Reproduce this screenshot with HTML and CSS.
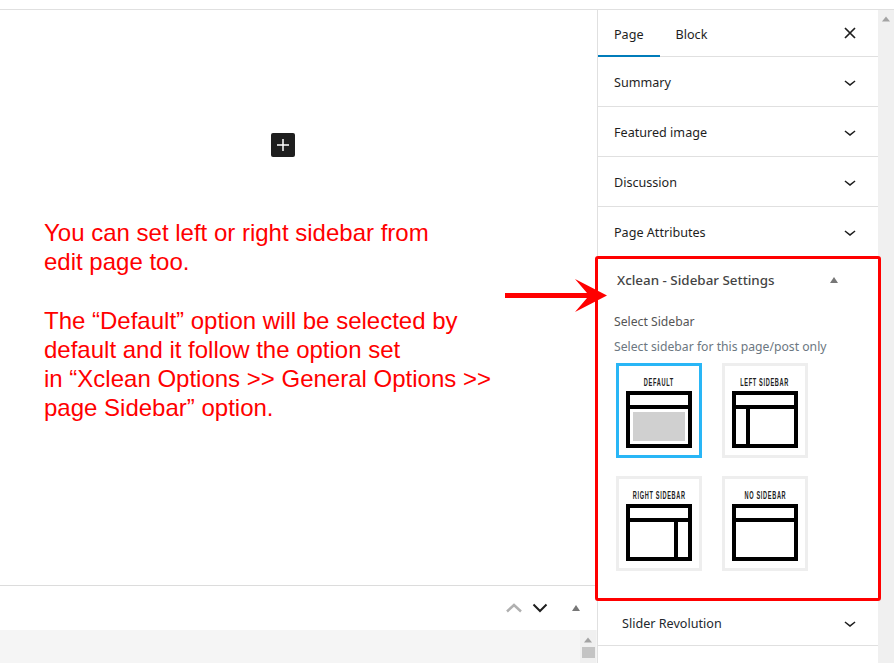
FILE: index.html
```html
<!DOCTYPE html>
<html lang="en">
<head>
    <meta charset="UTF-8">
    <meta name="viewport" content="width=device-width, initial-scale=1.0">
    <title>Edit Page</title>
    <link rel="stylesheet" href="styles.css">
</head>
<body>
    <svg class="sprite" width="0" height="0">
        <symbol id="chevron" viewBox="0 0 24 24">
            <path d="M17.5 11.6L12 16l-5.5-4.4.9-1.2L12 14l4.6-3.5z"></path>
        </symbol>
    </svg>

    <div class="app">
        <div class="top-gap"></div>
        <div class="workspace">
            <!-- Editor -->
            <main class="editor">
                <div class="canvas">
                    <button class="add-block" type="button" aria-label="Add block">
                        <svg width="24" height="24" viewBox="0 0 24 24"><path d="M11.25 6h1.5v5.25H18v1.5h-5.25V18h-1.5v-5.25H6v-1.5h5.25z"></path></svg>
                    </button>
                    <div class="note">
                        <p>
                            You can set left or right sidebar from<br>
                            edit page too.
                        </p>
                        <p>
                            The “Default” option will be selected by<br>
                            default and it follow the option set<br>
                            in “Xclean Options &gt;&gt; General Options &gt;&gt;<br>
                            page Sidebar” option.
                        </p>
                    </div>
                </div>
                <div class="meta-bar">
                    <svg class="move-up" width="16" height="10" viewBox="0 0 16 10"><polyline points="1,8.5 8,2 15,8.5"></polyline></svg>
                    <svg class="move-down" width="16" height="10" viewBox="0 0 16 10"><polyline points="1.5,1.5 8,8 14.5,1.5"></polyline></svg>
                    <svg class="toggle" width="10" height="8" viewBox="0 0 10 8"><polygon points="5,1 9,7 1,7"></polygon></svg>
                </div>
                <div class="meta-bottom">
                    <div class="mini-scroll">
                        <svg width="10" height="6" viewBox="0 0 10 6"><polygon points="5,0.5 9,5.5 1,5.5"></polygon></svg>
                        <div class="mini-thumb"></div>
                    </div>
                </div>
            </main>

            <!-- Settings sidebar -->
            <aside class="sidebar">
                <div class="tabs">
                    <span class="tab active">Page</span>
                    <span class="tab">Block</span>
                    <svg class="close" width="12" height="12" viewBox="0 0 12 12"><path d="M1 1l10 10M11 1L1 11"></path></svg>
                </div>

                <div class="row"><span>Summary</span><svg class="chev"><use href="#chevron"></use></svg></div>
                <div class="row"><span>Featured image</span><svg class="chev"><use href="#chevron"></use></svg></div>
                <div class="row"><span>Discussion</span><svg class="chev"><use href="#chevron"></use></svg></div>
                <div class="row"><span>Page Attributes</span><svg class="chev"><use href="#chevron"></use></svg></div>

                <section class="panel">
                    <div class="panel-head">
                        <span>Xclean - Sidebar Settings</span>
                        <svg width="10" height="8" viewBox="0 0 10 8"><polygon points="5,1 9,7 1,7"></polygon></svg>
                    </div>
                    <div class="panel-label">Select Sidebar</div>
                    <div class="panel-hint">Select sidebar for this page/post only</div>
                    <div class="layouts">
                        <div class="tile selected">
                            <span class="tile-name">Default</span>
                            <svg class="layout" width="66" height="57" viewBox="0 0 66 57">
                                <rect class="fill" x="7" y="21" width="52" height="29"></rect>
                                <rect x="2" y="2" width="62" height="53"></rect>
                                <path d="M0 16h66"></path>
                            </svg>
                        </div>
                        <div class="tile">
                            <span class="tile-name">Left Sidebar</span>
                            <svg class="layout" width="66" height="57" viewBox="0 0 66 57">
                                <rect x="2" y="2" width="62" height="53"></rect>
                                <path d="M0 16h66M16 16v41"></path>
                            </svg>
                        </div>
                        <div class="tile">
                            <span class="tile-name">Right Sidebar</span>
                            <svg class="layout" width="66" height="57" viewBox="0 0 66 57">
                                <rect x="2" y="2" width="62" height="53"></rect>
                                <path d="M0 16h66M50 16v41"></path>
                            </svg>
                        </div>
                        <div class="tile">
                            <span class="tile-name">No Sidebar</span>
                            <svg class="layout" width="66" height="57" viewBox="0 0 66 57">
                                <rect x="2" y="2" width="62" height="53"></rect>
                                <path d="M0 16h66"></path>
                            </svg>
                        </div>
                    </div>
                </section>

                <div class="row row-slider"><span>Slider Revolution</span><svg class="chev"><use href="#chevron"></use></svg></div>
            </aside>

            <div class="page-scroll">
                <svg width="10" height="6" viewBox="0 0 10 6"><polygon points="5,0.5 9,5.5 1,5.5"></polygon></svg>
            </div>
        </div>

        <!-- Annotation on top of the screenshot -->
        <div class="highlight"></div>
        <svg class="arrow" width="104" height="36" viewBox="0 0 104 36">
            <path d="M0 15h82L70 1l32 16.500L70 34l12-14H0z"></path>
        </svg>
    </div>
</body>
</html>
```

FILE: styles.css
```css
body {
    margin: 0;
    background: white;
    font-family: "Noto Sans", "Open Sans", sans-serif;
    font-size: 12.6px;
    color: #1e1e1e;
}
.sprite {
    position: absolute;
}
.app {
    position: relative;
    display: flex;
    flex-direction: column;
    width: 894px;
    height: 663px;
    overflow: hidden;
}
.top-gap {
    height: 9px;
    flex: none;
}
.workspace {
    flex: 1;
    display: flex;
    min-height: 0;
    border-top: 1px solid #e0e0e0;
}

/* Editor */
.editor {
    width: 597px;
    flex: none;
    display: flex;
    flex-direction: column;
}
.canvas {
    flex: 1;
    padding-top: 123px;
    border-bottom: 1px solid #dcdcdc;
}
.add-block {
    display: block;
    width: 24px;
    height: 24px;
    margin-left: 271px;
    padding: 0;
    border: none;
    border-radius: 2px;
    background: #1e1e1e;
    fill: white;
}
.add-block svg {
    display: block;
}
.note {
    margin: 61px 0 0 44px;
    font-family: "Liberation Sans", Arial, sans-serif;
    font-size: 24px;
    line-height: 29px;
    color: #f00;
}
.note p {
    margin: 0 0 30px;
}
.meta-bar {
    height: 44px;
    flex: none;
    display: flex;
    align-items: center;
    justify-content: flex-end;
    padding-right: 16px;
}
.meta-bar polyline {
    fill: none;
    stroke-width: 2;
}
.meta-bar .move-up polyline {
    stroke-width: 2.5;
}
.move-up {
    stroke: #b0b0b0;
}
.move-down {
    margin-left: 10px;
    stroke: #1e1e1e;
}
.toggle {
    margin-left: 23px;
    fill: #777;
}
.meta-bottom {
    height: 33px;
    flex: none;
    display: flex;
    justify-content: flex-end;
    padding-right: 1px;
    background: #f5f5f5;
}
.mini-scroll {
    width: 16px;
    background: #f0f0f0;
    text-align: center;
    fill: #a3a3a3;
}
.mini-scroll svg {
    display: block;
    margin: 7px auto 0;
}
.mini-thumb {
    width: 13px;
    height: 11px;
    margin: 4px 0 0 2px;
    background: #c4c4c4;
}

/* Sidebar */
.sidebar {
    width: 280px;
    flex: none;
    border-left: 1px solid #e0e0e0;
}
.tabs {
    display: flex;
    align-items: flex-start;
    height: 46px;
    border-bottom: 1px solid #e0e0e0;
}
.tab {
    height: 47px;
    line-height: 49px;
    padding: 0 16px;
}
.tab.active {
    box-shadow: inset 0 -2px 0 #007cba;
}
.close {
    align-self: center;
    margin-left: auto;
    margin-right: 22px;
    fill: none;
    stroke: #1e1e1e;
    stroke-width: 1.7;
}
.row {
    display: flex;
    align-items: center;
    justify-content: space-between;
    height: 49px;
    padding: 0 16px;
    border-bottom: 1px solid #e0e0e0;
}
.row span {
    margin-top: 2px;
}
.chev {
    width: 24px;
    height: 24px;
    fill: #1e1e1e;
}
.row-slider {
    height: 44px;
    padding-left: 24px;
    color: #23282d;
}
.row-slider span {
    margin-top: 0;
}
.panel {
    height: 344px;
    box-sizing: border-box;
    padding-left: 16px;
}
.panel-head {
    display: flex;
    align-items: center;
    height: 46px;
    margin-left: 3px;
    font-size: 13.4px;
    font-weight: 500;
    color: #444;
    fill: #777;
}
.panel-head svg {
    margin-left: 54px;
}
.panel-label {
    margin-top: 10px;
    line-height: 18px;
    font-size: 12.2px;
    color: #555;
}
.panel-hint {
    margin-top: 7px;
    line-height: 18px;
    font-size: 12.2px;
    color: #6c7781;
}
.layouts {
    display: grid;
    grid-template-columns: 86px 86px;
    grid-auto-rows: 95px;
    gap: 18px 20px;
    margin: 7px 0 0 2px;
}
.tile {
    display: flex;
    flex-direction: column;
    align-items: center;
    box-sizing: border-box;
    padding-top: 11px;
    border: 3px solid #eee;
}
.tile.selected {
    border-color: #29b6f6;
}
.tile-name {
    height: 12px;
    line-height: 12px;
    font-family: "Liberation Sans", sans-serif;
    font-size: 10px;
    font-weight: bold;
    letter-spacing: 1.2px;
    text-transform: uppercase;
    color: #222;
    white-space: nowrap;
    transform: scaleX(0.56);
}
.layout {
    margin-top: 2px;
    fill: none;
    stroke: black;
    stroke-width: 4;
}
.layout .fill {
    fill: #d0d0d0;
    stroke: none;
}
.page-scroll {
    width: 16px;
    flex: none;
    background: #f0f0f0;
    fill: #a3a3a3;
}
.page-scroll svg {
    display: block;
    margin: 6px auto 0;
}

/* Annotation */
.highlight {
    position: absolute;
    left: 595px;
    top: 256px;
    width: 286px;
    height: 345px;
    box-sizing: border-box;
    border: 3px solid #f00;
    border-radius: 3px;
}
.arrow {
    position: absolute;
    left: 505px;
    top: 278px;
    fill: #f00;
}
```
